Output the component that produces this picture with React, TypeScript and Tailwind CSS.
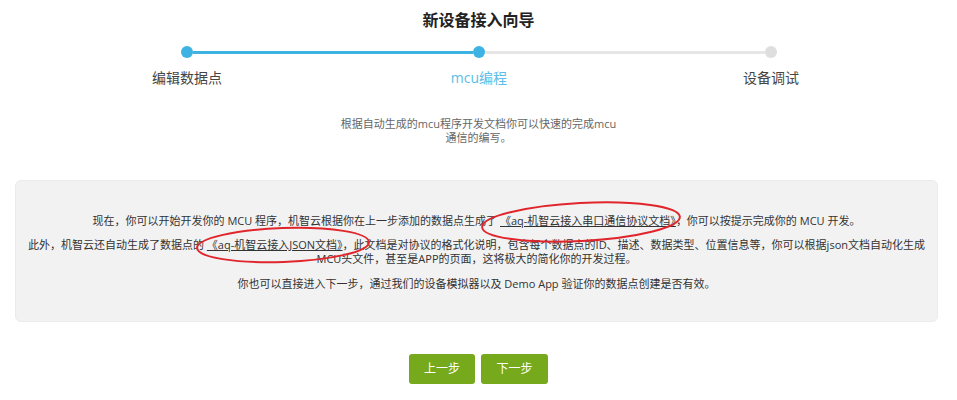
import React from "react";

const steps = [
  { label: "编辑数据点", active: false },
  { label: "mcu编程", active: true },
  { label: "设备调试", active: false },
];

const font = { fontFamily: '"Open Sans", "Noto Sans CJK SC", sans-serif' };

export default function App() {
  return (
    <div
      className="relative w-[957px] h-[400px] bg-white text-[#333] overflow-hidden"
      style={font}
    >
      <h1 className="mt-[10px] text-center text-[16px] leading-[20px] font-bold text-[#222]">
        新设备接入向导
      </h1>

      {/* stepper */}
      <div className="ml-[41px] w-[876px]">
        <div className="mt-[16px] px-[140px] flex items-center">
          <span className="w-[12px] h-[12px] rounded-full bg-[#3cb3e2]" />
          <span className="flex-1 h-[3px] bg-[#3cb3e2]" />
          <span className="w-[12px] h-[12px] rounded-full bg-[#3cb3e2]" />
          <span className="flex-1 h-[3px] bg-[#e6e6e6]" />
          <span className="w-[12px] h-[12px] rounded-full bg-[#dedede]" />
        </div>
        <div className="mt-[10px] grid grid-cols-3">
          {steps.map((s) => (
            <div
              key={s.label}
              className={`text-center text-[14px] leading-[20px] ${
                s.active ? "text-[#5bbde8]" : "text-[#444]"
              }`}
            >
              {s.label}
            </div>
          ))}
        </div>
      </div>

      <p className="mt-[29px] text-center text-[11px] leading-[14px] text-[#666]">
        根据自动生成的mcu程序开发文档你可以快速的完成mcu
        <br />
        通信的编写。
      </p>

      <div className="mt-[35px] ml-[15px] w-[923px] rounded-md bg-[#f2f2f2] border border-[#ebebeb] pt-[33px] pb-[30px] text-center text-[11px] leading-[14px] text-[#333] whitespace-nowrap">
        <p className="mb-[10px]">
          现在，你可以开始开发你的 MCU 程序，机智云根据你在上一步添加的数据点生成了{" "}
          <a className="underline">《aq-机智云接入串口通信协议文档》</a>，你可以按提示完成你的 MCU 开发。
        </p>
        <p className="mb-[11px]">
          此外，机智云还自动生成了数据点的{" "}
          <a className="underline">《aq-机智云接入JSON文档》</a>
          ，此文档是对协议的格式化说明，包含每个数据点的ID、描述、数据类型、位置信息等，你可以根据json文档自动化生成
          <br />
          MCU头文件，甚至是APP的页面，这将极大的简化你的开发过程。
        </p>
        <p>你也可以直接进入下一步，通过我们的设备模拟器以及 Demo App 验证你的数据点创建是否有效。</p>
      </div>

      <div className="mt-[32px] flex justify-center gap-[6px]">
        <button className="w-[66px] h-[30px] rounded-[3px] bg-[#76a91b] text-white text-[12px]">
          上一步
        </button>
        <button className="w-[67px] h-[30px] rounded-[3px] bg-[#76a91b] text-white text-[12px]">
          下一步
        </button>
      </div>

      {/* red annotation circles */}
      <svg
        className="absolute inset-0 pointer-events-none"
        width="957"
        height="400"
        viewBox="0 0 957 400"
      >
        <ellipse
          cx="581"
          cy="222"
          rx="99"
          ry="19"
          fill="none"
          stroke="#e0262c"
          strokeWidth="2"
          transform="rotate(-3 581 222)"
        />
        <ellipse
          cx="283"
          cy="245"
          rx="86"
          ry="17"
          fill="none"
          stroke="#e0262c"
          strokeWidth="2"
          transform="rotate(-2 283 245)"
        />
      </svg>
    </div>
  );
}
